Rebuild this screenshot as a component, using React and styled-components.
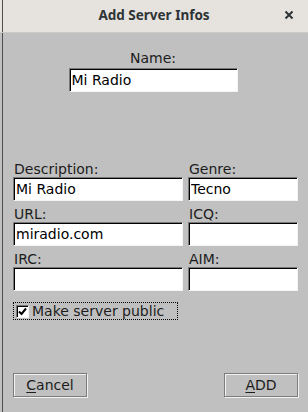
import React from "react";
import styled, { createGlobalStyle } from "styled-components";

const Global = createGlobalStyle`
  html, body {
    margin: 0;
    padding: 0;
    background: #c0c0c0;
  }
  * {
    box-sizing: border-box;
  }
`;

const edge = `linear-gradient(to right, transparent 2px, #4e4e4e 2px, #4e4e4e 3px, transparent 3px)`;

const Window = styled.div`
  width: 308px;
  height: 412px;
  display: flex;
  flex-direction: column;
  background: ${edge}, #c0c0c0;
  font-family: "DejaVu Sans", sans-serif;
  font-size: 14px;
  color: #1c1c1c;
  overflow: hidden;
`;

const TitleBar = styled.div`
  height: 33px;
  flex: none;
  display: flex;
  align-items: center;
  justify-content: center;
  position: relative;
  background: ${edge}, #e6e3df;
  border-bottom: 1px solid #cdc9c4;
`;

const Title = styled.div`
  font-family: "Noto Sans", sans-serif;
  font-weight: 700;
  font-size: 13.5px;
  color: #2e3436;
  padding-bottom: 2px;
`;

const Close = styled.button`
  position: absolute;
  right: 14px;
  top: 10px;
  width: 10px;
  height: 10px;
  padding: 0;
  border: none;
  background: none;
  display: flex;
`;

const Body = styled.div`
  flex: 1;
  display: flex;
  flex-direction: column;
  padding: 17px 10px 0 13px;
`;

const NameBlock = styled.div`
  display: flex;
  flex-direction: column;
  align-items: center;
  gap: 2px;
  padding-right: 5px;
`;

const Label = styled.label`
  display: block;
  height: 16px;
  line-height: 16px;
  padding-left: ${(p) => (p.$pad ? "1px" : "0")};
`;

const Input = styled.input`
  display: block;
  width: ${(p) => p.$w || "100%"};
  height: 24px;
  margin: 0;
  padding: 0 2px 1px;
  font-family: "DejaVu Sans", sans-serif;
  font-size: 14px;
  color: #000;
  background: #fff;
  border-style: solid;
  border-width: 1px;
  border-color: #7a7a7a #f4f4f4 #f4f4f4 #7a7a7a;
  box-shadow: inset 1px 1px 0 #000;
  outline: none;
`;

const Grid = styled.div`
  margin-top: 69px;
  display: grid;
  grid-template-columns: 170px 110px;
  column-gap: 5px;
  row-gap: 5px;
`;

const Field = styled.div`
  display: flex;
  flex-direction: column;
  gap: 0;
`;

const CheckRow = styled.label`
  margin-top: 11px;
  align-self: flex-start;
  width: 165px;
  height: 18px;
  display: flex;
  align-items: center;
  gap: 3px;
  padding-left: 2px;
  border: 1px dotted #000;
`;

const Box = styled.span`
  width: 13px;
  height: 13px;
  display: flex;
  align-items: center;
  justify-content: center;
  background: #fff;
  border-style: solid;
  border-width: 1px;
  border-color: #7a7a7a #f4f4f4 #f4f4f4 #7a7a7a;
  box-shadow: inset 1px 1px 0 #000;
`;

const CheckText = styled.span`
  font-size: 14px;
  line-height: 16px;
`;

const Buttons = styled.div`
  margin-top: auto;
  margin-bottom: 15px;
  display: flex;
  justify-content: space-between;
`;

const Button = styled.button`
  width: 74px;
  height: 24px;
  padding: 0 0 1px;
  font-family: "DejaVu Sans", sans-serif;
  font-size: 14px;
  color: #1c1c1c;
  background: #c0c0c0;
  border: 1px solid #7c7c7c;
  box-shadow: inset 1px 1px 0 #f2f2f2, 1px 1px 0 #f2f2f2;
  u {
    text-decoration-thickness: 1px;
    text-underline-offset: 2px;
  }
`;

const fields = [
  ["Description:", "Mi Radio", "Genre:", "Tecno"],
  ["URL:", "miradio.com", "ICQ:", ""],
  ["IRC:", "", "AIM:", ""],
];

export default function App() {
  return (
    <Window>
      <Global />
      <TitleBar>
        <Title>Add Server Infos</Title>
        <Close aria-label="close">
          <svg width="10" height="10" viewBox="0 0 10 10">
            <path d="M1.5 1.5 L8.5 8.5 M8.5 1.5 L1.5 8.5" stroke="#2e3436" strokeWidth="2" />
          </svg>
        </Close>
      </TitleBar>
      <Body>
        <NameBlock>
          <Label>Name:</Label>
          <Input $w="169px" defaultValue="Mi Radio" />
        </NameBlock>
        <Grid>
          {fields.map(([l1, v1, l2, v2]) => (
            <React.Fragment key={l1}>
              <Field>
                <Label $pad>{l1}</Label>
                <Input defaultValue={v1} />
              </Field>
              <Field>
                <Label $pad>{l2}</Label>
                <Input defaultValue={v2} />
              </Field>
            </React.Fragment>
          ))}
        </Grid>
        <CheckRow>
          <Box>
            <svg width="9" height="9" viewBox="0 0 9 9">
              <path d="M1 4.5 L3.5 7 L8 1.5" stroke="#000" strokeWidth="2" fill="none" />
            </svg>
          </Box>
          <CheckText>Make server public</CheckText>
        </CheckRow>
        <Buttons>
          <Button>
            <u>C</u>ancel
          </Button>
          <Button>
            <u>A</u>DD
          </Button>
        </Buttons>
      </Body>
    </Window>
  );
}
